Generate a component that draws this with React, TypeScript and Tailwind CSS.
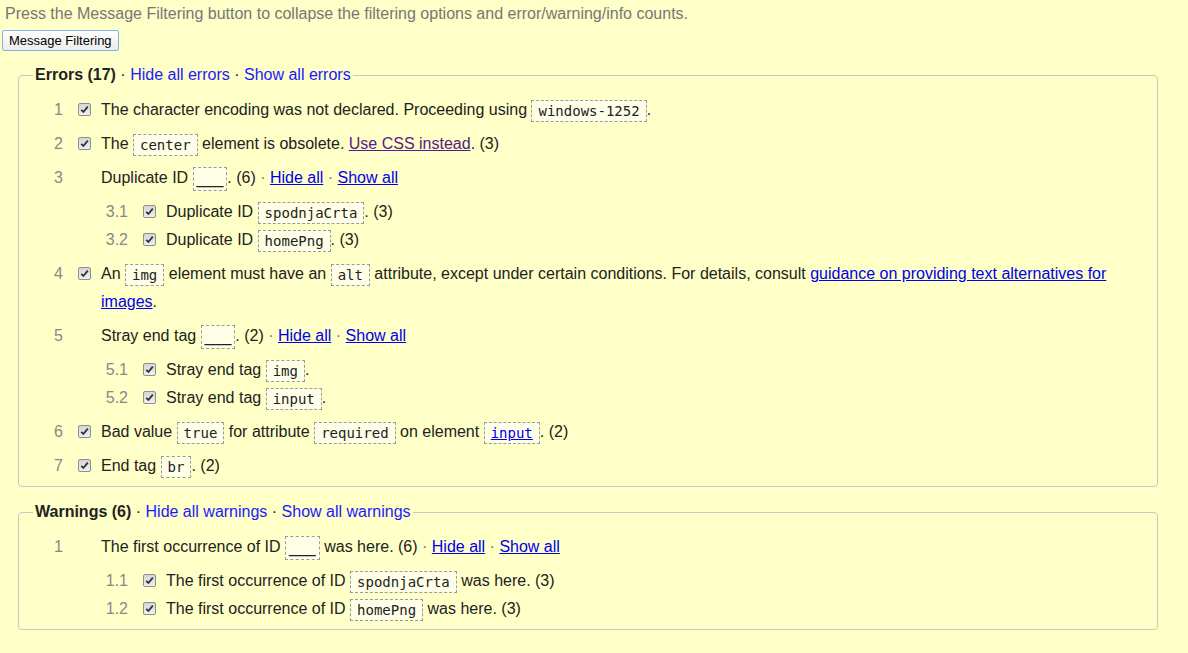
import type { ReactNode } from 'react'

const sans = "font-['Liberation_Sans',Arial,sans-serif]"

function Code({ children }: { children: ReactNode }) {
  return (
    <code className="inline-block align-middle border border-dashed border-[#9a9a9a] bg-[#ffffe8] px-[6px] py-[1px] leading-[18px] text-[14px] text-[#222] font-['DejaVu_Sans_Mono',monospace]">
      {children}
    </code>
  )
}

function Blank() {
  return (
    <span className="inline-block align-middle border border-dashed border-[#9a9a9a] bg-[#ffffe8] px-[3px] py-[1px] leading-[20px]">
      ___
    </span>
  )
}

function Check() {
  return (
    <span className="mt-[7px] flex h-[13px] w-[13px] shrink-0 items-center justify-center rounded-[2px] border border-[#8e8f8f] bg-gradient-to-b from-[#d6d6d6] to-[#f0f0f0]">
      <svg width="9" height="9" viewBox="0 0 9 9">
        <path d="M1.2 4.8 L3.4 7 L7.8 1.6" fill="none" stroke="#333" strokeWidth="1.8" />
      </svg>
    </span>
  )
}

function Row({ num, check = true, children, sub }: { num: string; check?: boolean; children: ReactNode; sub?: ReactNode }) {
  return (
    <li>
      <div className="flex items-start leading-[28px]">
        <span className="w-[30px] shrink-0 text-right text-[#888]">{num}</span>
        <span className="ml-[15px] w-[13px] shrink-0">{check && <Check />}</span>
        <div className="ml-[10px] flex-1">{children}</div>
      </div>
      {sub && <ul className="mt-[6px] pl-[65px]">{sub}</ul>}
    </li>
  )
}

function SubRow({ num, children }: { num: string; children: ReactNode }) {
  return (
    <li className="flex items-start leading-[28px]">
      <span className="w-[30px] shrink-0 text-right text-[#888]">{num}</span>
      <span className="ml-[15px] w-[13px] shrink-0"><Check /></span>
      <div className="ml-[10px] flex-1">{children}</div>
    </li>
  )
}

const A = ({ children, visited }: { children: ReactNode; visited?: boolean }) => (
  <a href="#" className={visited ? 'text-[#551a8b] underline' : 'text-[#0000ee] underline'}>{children}</a>
)

const Dot = () => <span className="text-[#777]"> · </span>

function Legend({ title, hide, show }: { title: string; hide: string; show: string }) {
  return (
    <legend className="px-[2px] leading-[20px]">
      <b className="text-[#222]">{title}</b>
      <span className="text-[#222]"> · </span>
      <a href="#" className="text-[#1a1aff]">{hide}</a>
      <span className="text-[#222]"> · </span>
      <a href="#" className="text-[#1a1aff]">{show}</a>
    </legend>
  )
}

export default function App() {
  return (
    <div className={`min-h-[653px] bg-[#ffffc8] text-[16px] text-[#222] ${sans}`}>
      <p className="pl-[5px] pt-[4px] leading-[20px] text-[#777]">
        Press the Message Filtering button to collapse the filtering options and error/warning/info counts.
      </p>
      <button className="ml-[2px] mt-[6px] block h-[21px] rounded-[2px] border border-[#7eb4ea] bg-gradient-to-b from-white to-[#ececec] px-[6px] text-[13px] leading-[17px] text-black">
        Message Filtering
      </button>

      <fieldset className="ml-[18px] mt-[14px] w-[1140px] rounded-[4px] border border-[#c8c8c8] pb-[6px] pl-[14px] pr-[14px] pt-[11px]">
        <Legend title="Errors (17)" hide="Hide all errors" show="Show all errors" />
        <ol className="flex flex-col gap-[6px]">
          <Row num="1">The character encoding was not declared. Proceeding using <Code>windows-1252</Code>.</Row>
          <Row num="2">The <Code>center</Code> element is obsolete. <A visited>Use CSS instead</A>. (3)</Row>
          <Row
            num="3"
            check={false}
            sub={
              <>
                <SubRow num="3.1">Duplicate ID <Code>spodnjaCrta</Code>. (3)</SubRow>
                <SubRow num="3.2">Duplicate ID <Code>homePng</Code>. (3)</SubRow>
              </>
            }
          >
            Duplicate ID <Blank />. (6)<Dot /><A>Hide all</A><Dot /><A>Show all</A>
          </Row>
          <Row num="4">
            An <Code>img</Code> element must have an <Code>alt</Code> attribute, except under certain conditions. For details, consult <A>guidance on providing text alternatives for images</A>.
          </Row>
          <Row
            num="5"
            check={false}
            sub={
              <>
                <SubRow num="5.1">Stray end tag <Code>img</Code>.</SubRow>
                <SubRow num="5.2">Stray end tag <Code>input</Code>.</SubRow>
              </>
            }
          >
            Stray end tag <Blank />. (2)<Dot /><A>Hide all</A><Dot /><A>Show all</A>
          </Row>
          <Row num="6">
            Bad value <Code>true</Code> for attribute <Code>required</Code> on element <Code><a href="#" className="text-[#0000ee] underline">input</a></Code>. (2)
          </Row>
          <Row num="7">End tag <Code>br</Code>. (2)</Row>
        </ol>
      </fieldset>

      <fieldset className="ml-[18px] mt-[15px] w-[1140px] rounded-[4px] border border-[#c8c8c8] pb-[6px] pl-[14px] pr-[14px] pt-[11px]">
        <Legend title="Warnings (6)" hide="Hide all warnings" show="Show all warnings" />
        <ol className="flex flex-col gap-[6px]">
          <Row
            num="1"
            check={false}
            sub={
              <>
                <SubRow num="1.1">The first occurrence of ID <Code>spodnjaCrta</Code> was here. (3)</SubRow>
                <SubRow num="1.2">The first occurrence of ID <Code>homePng</Code> was here. (3)</SubRow>
              </>
            }
          >
            The first occurrence of ID <Blank /> was here. (6)<Dot /><A>Hide all</A><Dot /><A>Show all</A>
          </Row>
        </ol>
      </fieldset>
    </div>
  )
}
